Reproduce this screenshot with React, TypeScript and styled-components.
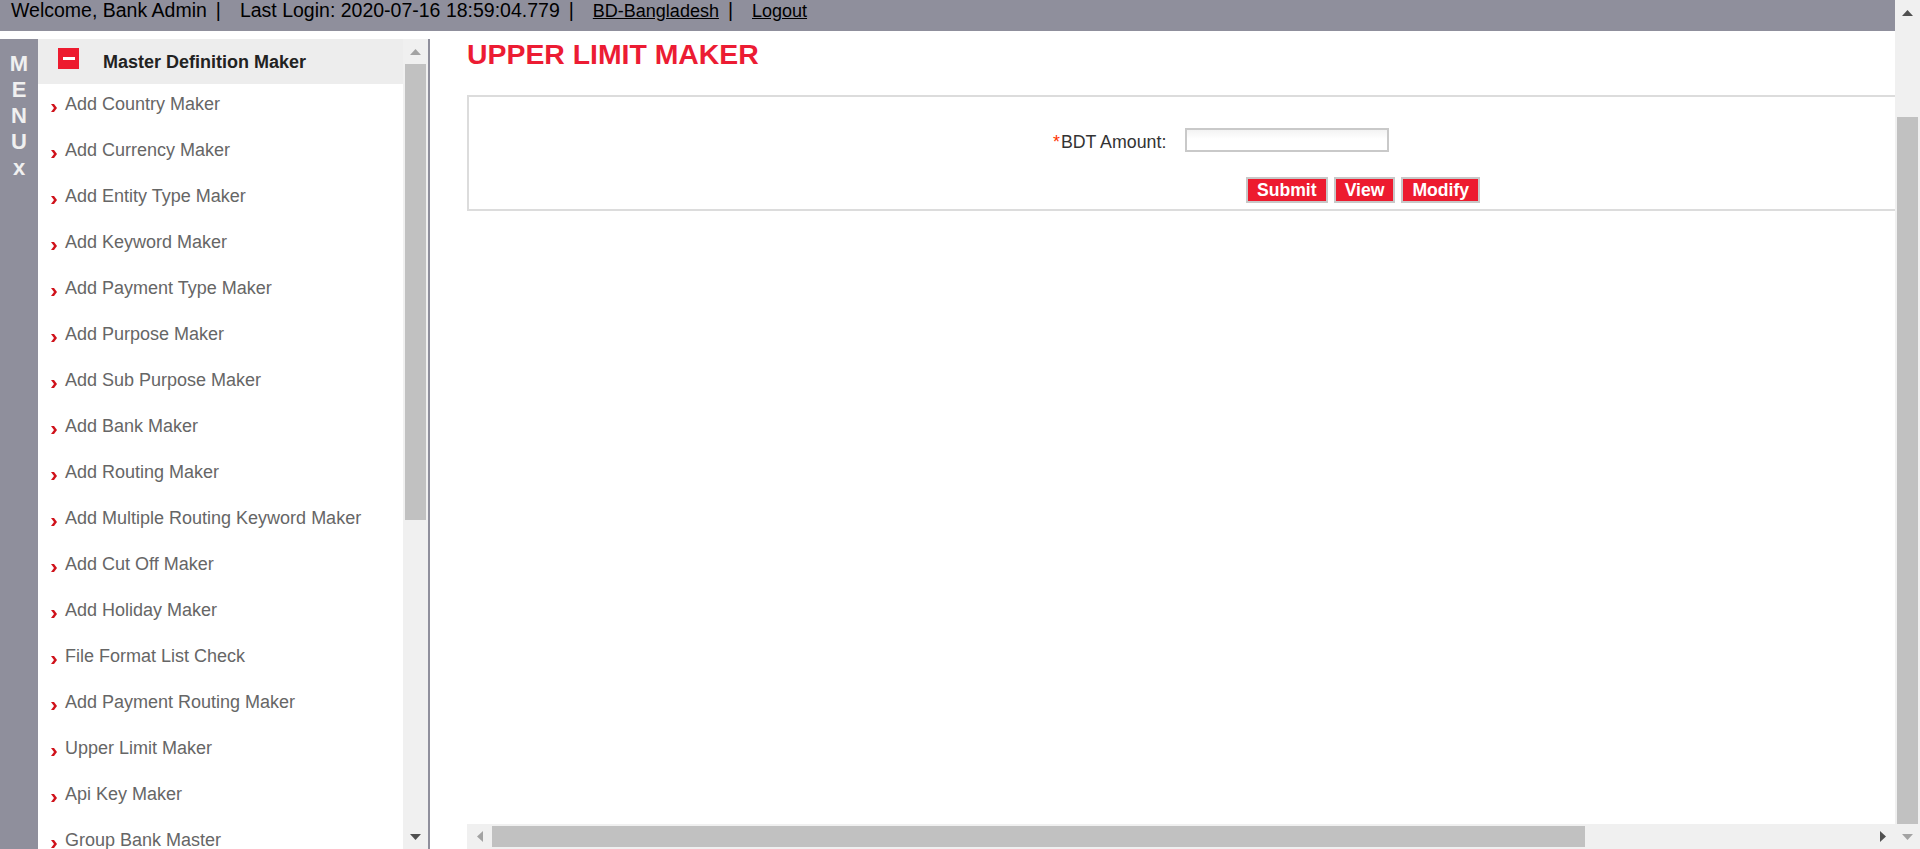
import React from "react";
import styled, { createGlobalStyle } from "styled-components";

const GlobalStyle = createGlobalStyle`
  html, body { margin: 0; padding: 0; overflow: hidden; background: #fff; }
  body { font-family: "Liberation Sans", Arial, sans-serif; }
  *, *::before, *::after { box-sizing: border-box; }
`;

const GRAY = "#8f8f9c";
const RED = "#ed1b2f";

const Page = styled.div`
  display: flex;
  width: 1920px;
  height: 849px;
  overflow: hidden;
  background: #fff;
`;

const Frame = styled.div`
  flex: 1;
  min-width: 0;
  display: flex;
  flex-direction: column;
`;

const TopBar = styled.header`
  height: 31px;
  flex-shrink: 0;
  background: ${GRAY};
  display: flex;
  align-items: baseline;
  padding-left: 11px;
  color: #000;
  font-size: 19.5px;
  line-height: 21px;
  white-space: nowrap;
`;

const TopText = styled.span``;

const TopLink = styled.a`
  color: #000;
  font-size: 18px;
  text-decoration: underline;
  cursor: pointer;
`;

const Sep = styled.span`
  margin: 0 19px 0 9px;
`;

const Body = styled.div`
  flex: 1;
  min-height: 0;
  display: flex;
`;

const MenuStrip = styled.div`
  width: 38px;
  flex-shrink: 0;
  margin-top: 8px;
  background: ${GRAY};
  display: flex;
  flex-direction: column;
  align-items: center;
  padding-top: 12px;
  color: #f0f0f0;
  font-weight: bold;
  font-size: 22px;
  line-height: 26px;
`;

const Sidebar = styled.nav`
  width: 392px;
  flex-shrink: 0;
  margin-top: 8px;
  display: flex;
  border-right: 2px solid ${GRAY};
  overflow: hidden;
`;

const SideList = styled.div`
  width: 365px;
  flex-shrink: 0;
  overflow: hidden;
  background: #fff;
`;

const GroupHead = styled.div`
  height: 45px;
  background: #ededed;
  display: flex;
  align-items: flex-start;
  gap: 24px;
  padding: 9px 0 0 20px;
`;

const Toggle = styled.span`
  width: 21px;
  height: 21px;
  background: ${RED};
  display: flex;
  align-items: center;
  justify-content: center;
  flex-shrink: 0;
`;

const ToggleBar = styled.span`
  width: 12px;
  height: 3px;
  background: #fff;
`;

const GroupTitle = styled.span`
  padding-top: 4px;
  font-weight: bold;
  font-size: 18px;
  line-height: 21px;
  color: #222;
`;

const Items = styled.ul`
  list-style: none;
  margin: 0;
  padding: 10px 0 0 13px;
`;

const Item = styled.li`
  height: 46px;
  font-size: 18px;
  line-height: 20px;
  color: #666;
  white-space: nowrap;
`;

const Bullet = styled.svg`
  width: 6px;
  height: 8px;
  vertical-align: -2px;
  margin-right: 8px;
`;

const VBar = styled.div<{ $h?: string }>`
  width: 25px;
  flex-shrink: 0;
  background: #f0f0f0;
  display: flex;
  flex-direction: column;
  height: ${(p) => p.$h || "auto"};
`;

const HBar = styled.div`
  height: 25px;
  flex-shrink: 0;
  background: #f0f0f0;
  display: flex;
`;

const ArrowBtn = styled.div`
  width: 25px;
  height: 25px;
  flex-shrink: 0;
  display: flex;
  align-items: center;
  justify-content: center;
`;

const VTrack = styled.div`
  flex: 1;
  min-height: 0;
  padding: 0 2px;
`;

const HTrack = styled.div`
  flex: 1;
  min-width: 0;
  padding: 2px 0;
`;

const VThumb = styled.div<{ $offset: number; $size: number }>`
  margin-top: ${(p) => p.$offset}px;
  height: ${(p) => p.$size}px;
  background: #c1c1c1;
`;

const HThumb = styled.div<{ $offset: number; $size: number }>`
  margin-left: ${(p) => p.$offset}px;
  width: ${(p) => p.$size}px;
  height: 100%;
  background: #c1c1c1;
`;

const Main = styled.main`
  flex: 1;
  min-width: 0;
  display: flex;
  flex-direction: column;
  padding-left: 37px;
`;

const Title = styled.h1`
  margin: 6px 0 0;
  font-size: 28.4px;
  line-height: 34px;
  font-weight: bold;
  color: #ec1c33;
  white-space: nowrap;
`;

const Viewport = styled.div`
  flex: 1;
  min-height: 0;
  overflow: hidden;
  padding-top: 24px;
`;

const FormBox = styled.div`
  width: 1790px;
  border: 2px solid #dcdcdc;
  padding: 31px 0 6px;
`;

const Row = styled.div<{ $indent: number; $gap?: number; $top?: number }>`
  display: flex;
  align-items: flex-end;
  padding-left: ${(p) => p.$indent}px;
  gap: ${(p) => p.$gap || 0}px;
  margin-top: ${(p) => p.$top || 0}px;
`;

const Label = styled.label`
  font-size: 17.8px;
  line-height: 20px;
  color: #333;
  white-space: nowrap;
`;

const Star = styled.span`
  color: #ff3300;
  margin-right: 1px;
`;

const Input = styled.input`
  width: 204px;
  height: 24px;
  margin-left: 19px;
  border: 2px solid #c9c9c9;
  background: linear-gradient(#f3f3f3, #fff 45%);
  padding: 0 4px;
  font: inherit;
  outline: none;
`;

const Button = styled.button`
  height: 26px;
  padding: 0 9px;
  border: 2px solid #c8c8c8;
  background: ${RED};
  color: #fff;
  font-family: "Liberation Sans", Arial, sans-serif;
  font-weight: bold;
  font-size: 17.6px;
  line-height: 22px;
  cursor: pointer;
`;

type Dir = "up" | "down" | "left" | "right";

const Arrow = ({ dir, active }: { dir: Dir; active?: boolean }) => {
  const fill = active ? "#505050" : "#a3a3a3";
  const vertical = dir === "up" || dir === "down";
  const w = vertical ? 11 : 6;
  const h = vertical ? 6 : 11;
  const pts =
    dir === "up"
      ? "5.5,0 11,6 0,6"
      : dir === "down"
      ? "0,0 11,0 5.5,6"
      : dir === "left"
      ? "6,0 6,11 0,5.5"
      : "0,0 6,5.5 0,11";
  return (
    <svg width={w} height={h} viewBox={`0 0 ${w} ${h}`}>
      <polygon points={pts} fill={fill} />
    </svg>
  );
};

const menuItems = [
  "Add Country Maker",
  "Add Currency Maker",
  "Add Entity Type Maker",
  "Add Keyword Maker",
  "Add Payment Type Maker",
  "Add Purpose Maker",
  "Add Sub Purpose Maker",
  "Add Bank Maker",
  "Add Routing Maker",
  "Add Multiple Routing Keyword Maker",
  "Add Cut Off Maker",
  "Add Holiday Maker",
  "File Format List Check",
  "Add Payment Routing Maker",
  "Upper Limit Maker",
  "Api Key Maker",
  "Group Bank Master",
];

export default function App() {
  return (
    <>
      <GlobalStyle />
      <Page>
        <Frame>
          <TopBar>
            <TopText>Welcome, Bank Admin</TopText>
            <Sep>|</Sep>
            <TopText>Last Login: 2020-07-16 18:59:04.779</TopText>
            <Sep>|</Sep>
            <TopLink>BD-Bangladesh</TopLink>
            <Sep>|</Sep>
            <TopLink>Logout</TopLink>
          </TopBar>
          <Body>
            <MenuStrip>
              <span>M</span>
              <span>E</span>
              <span>N</span>
              <span>U</span>
              <span>x</span>
            </MenuStrip>
            <Sidebar>
              <SideList>
                <GroupHead>
                  <Toggle>
                    <ToggleBar />
                  </Toggle>
                  <GroupTitle>Master Definition Maker</GroupTitle>
                </GroupHead>
                <Items>
                  {menuItems.map((t) => (
                    <Item key={t}>
                      <Bullet viewBox="0 0 6 8">
                        <polygon points="0,0 3,0 6,4 3,8 0,8 3,4" fill="#d0121b" />
                      </Bullet>
                      {t}
                    </Item>
                  ))}
                </Items>
              </SideList>
              <VBar>
                <ArrowBtn>
                  <Arrow dir="up" />
                </ArrowBtn>
                <VTrack>
                  <VThumb $offset={0} $size={456} />
                </VTrack>
                <ArrowBtn>
                  <Arrow dir="down" active />
                </ArrowBtn>
              </VBar>
            </Sidebar>
            <Main>
              <Title>UPPER LIMIT MAKER</Title>
              <Viewport>
                <FormBox>
                  <Row $indent={584}>
                    <Label>
                      <Star>*</Star>BDT Amount:
                    </Label>
                    <Input type="text" />
                  </Row>
                  <Row $indent={777} $gap={6} $top={25}>
                    <Button>Submit</Button>
                    <Button>View</Button>
                    <Button>Modify</Button>
                  </Row>
                </FormBox>
              </Viewport>
              <HBar>
                <ArrowBtn>
                  <Arrow dir="left" />
                </ArrowBtn>
                <HTrack>
                  <HThumb $offset={0} $size={1093} />
                </HTrack>
                <ArrowBtn>
                  <Arrow dir="right" active />
                </ArrowBtn>
              </HBar>
            </Main>
          </Body>
        </Frame>
        <VBar $h="849px">
          <ArrowBtn>
            <Arrow dir="up" active />
          </ArrowBtn>
          <VTrack>
            <VThumb $offset={92} $size={707} />
          </VTrack>
          <ArrowBtn>
            <Arrow dir="down" />
          </ArrowBtn>
        </VBar>
      </Page>
    </>
  );
}
